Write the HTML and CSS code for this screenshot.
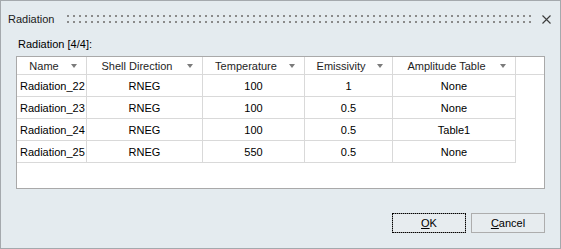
FILE: index.html
```html
<!DOCTYPE html>
<html>
<head>
    <meta charset="utf-8">
    <title>Radiation</title>
<link rel="stylesheet" href="styles.css">
</head>
<body>

<div class="dialog">
  <div class="titlebar">
    <span class="title">Radiation</span>
    <div class="grip">
      <div class="dots"></div>
      <div class="dots"></div>
    </div>
    <svg class="closebtn" width="9" height="9" viewBox="0 0 9 9">
      <path d="M0.5 0.5 L8.5 8.5 M8.5 0.5 L0.5 8.5" stroke="#3c3c3c" stroke-width="1.1" fill="none"/>
    </svg>
  </div>

  <div class="caption">Radiation [4/4]:</div>

  <div class="gridbox">
    <div class="row head">
      <div class="cell"><span class="hlabel">Name</span><span class="arrow"></span></div>
      <div class="cell"><span class="hlabel">Shell Direction</span><span class="arrow"></span></div>
      <div class="cell"><span class="hlabel">Temperature</span><span class="arrow"></span></div>
      <div class="cell"><span class="hlabel">Emissivity</span><span class="arrow"></span></div>
      <div class="cell"><span class="hlabel">Amplitude Table</span><span class="arrow"></span></div>
      <div class="filler"></div>
    </div>
    <div class="row">
      <div class="cell name">Radiation_22</div>
      <div class="cell">RNEG</div>
      <div class="cell">100</div>
      <div class="cell">1</div>
      <div class="cell">None</div>
    </div>
    <div class="row">
      <div class="cell name">Radiation_23</div>
      <div class="cell">RNEG</div>
      <div class="cell">100</div>
      <div class="cell">0.5</div>
      <div class="cell">None</div>
    </div>
    <div class="row">
      <div class="cell name">Radiation_24</div>
      <div class="cell">RNEG</div>
      <div class="cell">100</div>
      <div class="cell">0.5</div>
      <div class="cell">Table1</div>
    </div>
    <div class="row">
      <div class="cell name">Radiation_25</div>
      <div class="cell">RNEG</div>
      <div class="cell">550</div>
      <div class="cell">0.5</div>
      <div class="cell">None</div>
    </div>
  </div>

  <div class="buttons">
    <button class="btn default"><u>O</u>K</button>
    <button class="btn"><u>C</u>ancel</button>
  </div>
</div>

</body>
</html>
```

FILE: styles.css
```css
body {
    margin: 0;
    font-family: "Liberation Sans", Arial, sans-serif;
    font-size: 11px;
    color: #000000;
}

.dialog {
    width: 561px;
    height: 249px;
    box-sizing: border-box;
    border: 1px solid #a4a9ad;
    background-color: #e4ebef;
    display: flex;
    flex-direction: column;
}

.titlebar {
    display: flex;
    align-items: center;
    height: 24px;
    padding: 6px 9px 0 7px;
}

.title {
    color: #1a1a1a;
    width: 59px;
}

.grip {
    flex: 1;
    display: flex;
    flex-direction: column;
    gap: 4px;
    margin-right: 9px;
}

.dots {
    height: 2px;
    background-image: repeating-linear-gradient(90deg, #8a8a8a 0 2px, transparent 2px 6px);
}

.closebtn {
    display: block;
}

.caption {
    padding: 7px 0 0 17px;
    height: 18px;
}

.gridbox {
    margin: 0 15px;
    height: 133px;
    box-sizing: border-box;
    border: 1px solid #a9a9a9;
    background-color: #ffffff;
}

.row {
    display: grid;
    grid-template-columns: 70px 116px 102px 88px 123px 1fr;
    height: 22px;
}

.row.head {
    height: 18px;
}

.cell {
    box-sizing: border-box;
    border-right: 1px solid #d9d9d9;
    border-bottom: 1px solid #d9d9d9;
    display: flex;
    align-items: center;
    justify-content: center;
    white-space: nowrap;
}

.cell.name {
    justify-content: flex-start;
    padding-left: 3px;
}

.head .cell {
    justify-content: flex-start;
    padding-right: 9px;
    color: #1e1e1e;
}

.head .filler {
    border-bottom: 1px solid #d9d9d9;
}

.hlabel {
    flex: 1;
    text-align: center;
}

.arrow {
    width: 0;
    height: 0;
    border-left: 3.5px solid transparent;
    border-right: 3.5px solid transparent;
    border-top: 4px solid #7b7b7b;
}

.buttons {
    display: flex;
    justify-content: flex-end;
    gap: 5px;
    padding: 24px 15px 0 0;
}

.btn {
    width: 74px;
    height: 20px;
    padding: 0;
    font-family: "Liberation Sans", Arial, sans-serif;
    font-size: 11px;
    color: #000000;
    background-color: #e7ecef;
    border: 1px solid #adadad;
}

.btn.default {
    border-color: #8a8a8a;
    outline: 1px dotted #000000;
    outline-offset: -1px;
}
```
